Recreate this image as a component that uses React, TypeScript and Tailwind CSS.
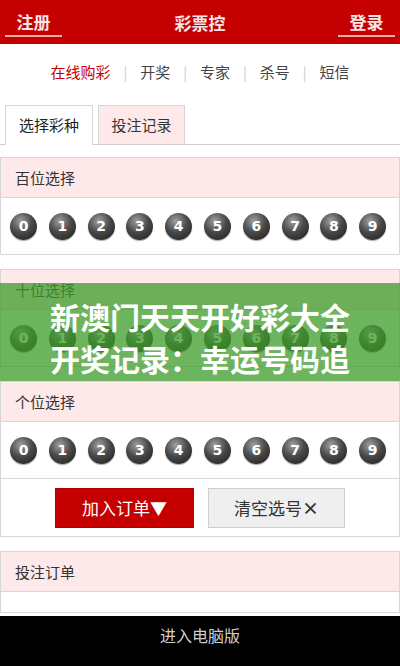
import React from "react";

const digits = [0, 1, 2, 3, 4, 5, 6, 7, 8, 9];
const navItems = ["在线购彩", "开奖", "专家", "杀号", "短信"];

function Ball({ n }: { n: number }) {
  return (
    <div className="w-[27px] h-[27px] rounded-full flex items-center justify-center bg-[radial-gradient(circle_at_40%_30%,#a0a0a0_0%,#4a4a4a_45%,#1a1a1a_100%)] shadow-[0_1px_1px_rgba(0,0,0,0.35)]">
      <span className="text-white text-[14px] font-bold leading-none font-['DejaVu_Sans',sans-serif]">
        {n}
      </span>
    </div>
  );
}

function Section({
  title,
  children,
}: {
  title: string;
  children?: React.ReactNode;
}) {
  return (
    <div className="border border-[#d6d6d6] bg-white">
      <div className="h-[40px] bg-[#fde9e9] border-b border-[#d6d6d6] flex items-center pl-[14px] pt-[2px] text-[15px] text-[#333]">
        {title}
      </div>
      {children}
    </div>
  );
}

function BallRow() {
  return (
    <div className="h-[56px] flex items-center gap-[11.8px] pl-[9px]">
      {digits.map((d) => (
        <Ball key={d} n={d} />
      ))}
    </div>
  );
}

export default function App() {
  return (
    <div className="relative w-[400px] h-[666px] overflow-hidden bg-white font-['Noto_Sans_CJK_SC','Noto_Sans',sans-serif]">
      {/* top bar */}
      <div className="h-[44px] bg-[#c40000] flex justify-between px-[5px]">
        <div className="w-[57px] h-[37px] border-b-2 border-[#f4a9a9] flex items-center justify-center pt-[9px] text-[17px] font-bold text-[#fbe4e4]">
          注册
        </div>
        <div className="h-[37px] flex items-center pt-[9px] text-[17px] font-bold text-[#fbe4e4]">
          彩票控
        </div>
        <div className="w-[57px] h-[37px] border-b-2 border-[#f4a9a9] flex items-center justify-center pt-[9px] text-[17px] font-bold text-[#fbe4e4]">
          登录
        </div>
      </div>

      {/* nav */}
      <div className="h-[56px] flex items-center justify-center gap-[13px] text-[15px] text-[#444]">
        {navItems.map((item, i) => (
          <React.Fragment key={item}>
            {i > 0 && <span className="text-[#ccc] text-[14px]">|</span>}
            <span className={i === 0 ? "text-[#c40000]" : ""}>{item}</span>
          </React.Fragment>
        ))}
      </div>

      {/* tabs */}
      <div className="mt-[5px] flex gap-[5px] pl-[5px] border-b border-[#cfcfcf] h-[40px]">
        <div className="w-[88px] h-[40px] border border-b-0 border-[#d6d6d6] bg-white flex items-center justify-center text-[15px] text-[#222]">
          选择彩种
        </div>
        <div className="w-[87px] h-[39px] border border-b-0 border-[#d6d6d6] bg-[#fde9e9] flex items-center justify-center text-[15px] text-[#333]">
          投注记录
        </div>
      </div>

      <div className="mt-[12px] flex flex-col gap-[14px]">
        <Section title="百位选择">
          <BallRow />
        </Section>
        <Section title="十位选择">
          <BallRow />
        </Section>
        <Section title="个位选择">
          <BallRow />
          <div className="h-[58px] border-t border-[#d6d6d6] flex items-center justify-center gap-[14px]">
            <div className="w-[139px] h-[40px] bg-[#c40000] border border-[#b00000] flex items-center justify-center text-[17px] text-white">
              加入订单▼
            </div>
            <div className="w-[137px] h-[40px] bg-[#efefef] border border-[#cfcfcf] flex items-center justify-center text-[17px] text-[#333]">
              清空选号<span className="font-bold">×</span>
            </div>
          </div>
        </Section>
        <Section title="投注订单">
          <div className="h-[20px]" />
        </Section>
      </div>

      {/* footer */}
      <div className="absolute left-0 right-0 bottom-0 h-[50px] bg-black flex items-start justify-center pt-[7px] text-[16px] text-[#cfcfcf]">
        进入电脑版
      </div>

      {/* watermark overlay */}
      <div className="absolute left-0 right-0 top-[283px] h-[98px] bg-[rgba(60,155,40,0.75)] pt-[12px] text-center text-white font-bold text-[30px] leading-[42px]">
        <div>新澳门天天开好彩大全</div>
        <div>开奖记录：幸运号码追</div>
      </div>
    </div>
  );
}
